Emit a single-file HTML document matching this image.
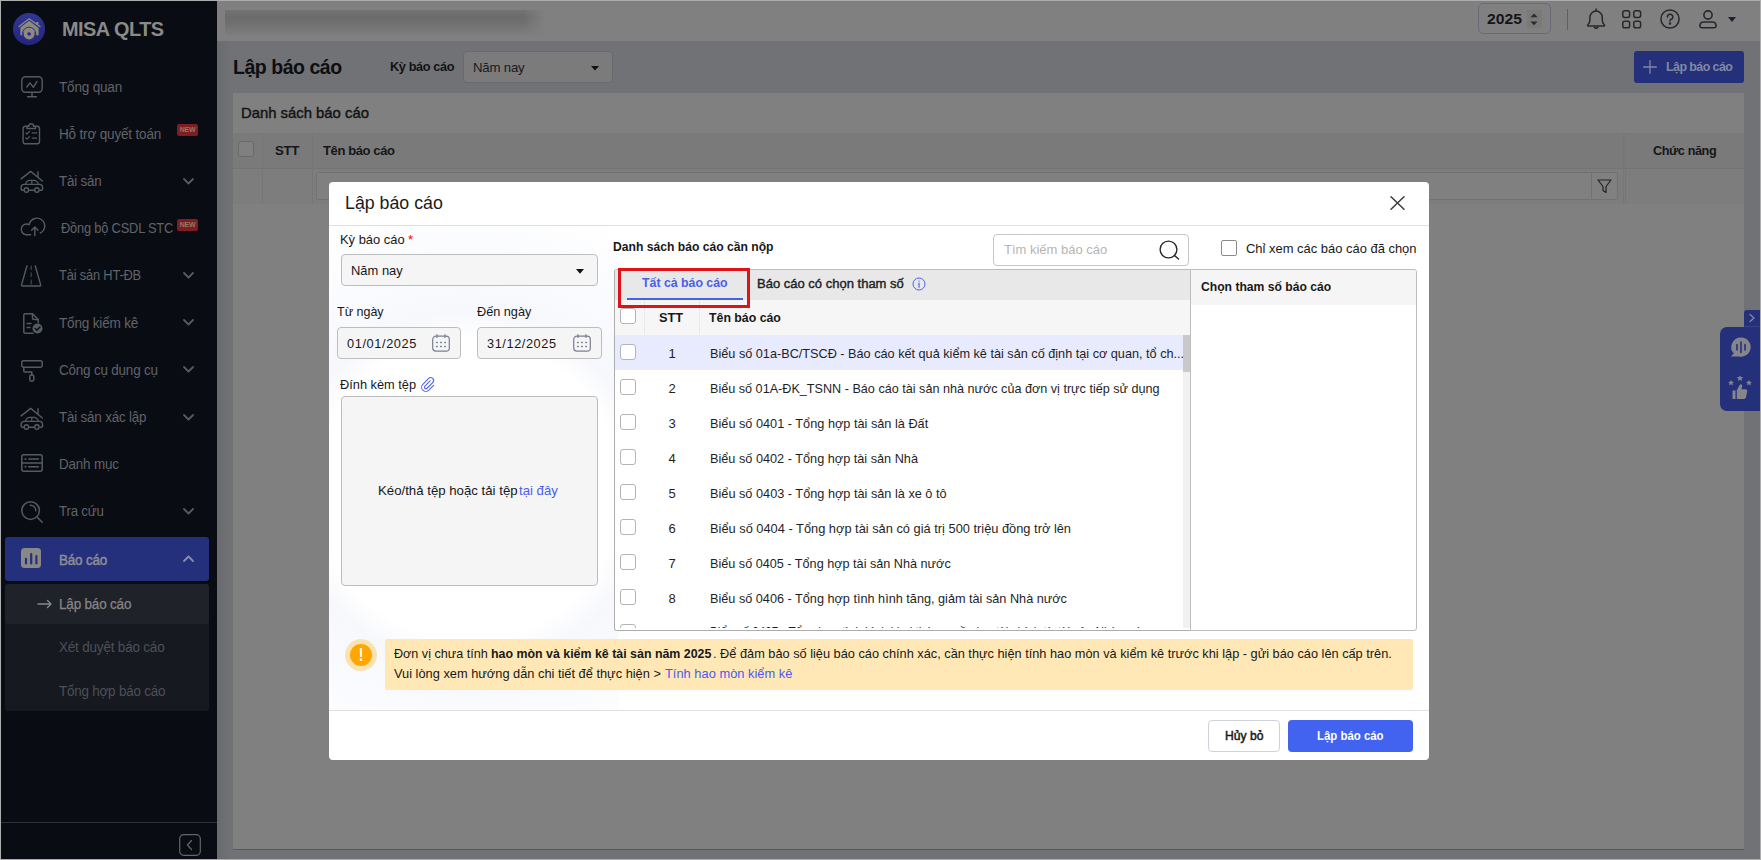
<!DOCTYPE html>
<html lang="vi"><head>
<meta charset="utf-8">
<title>MISA QLTS - Lập báo cáo</title>
<style>
*{box-sizing:border-box;margin:0;padding:0}
html,body{width:1761px;height:860px;overflow:hidden;background:#808080}
body{font-family:"Liberation Sans",sans-serif;font-size:13px;color:#111;position:relative}
.abs{position:absolute}
.t{position:absolute;white-space:nowrap;line-height:20px;height:20px}
.b{font-weight:bold}
.m{font-weight:normal;-webkit-text-stroke:0.4px currentColor}
svg{position:absolute;overflow:visible}
/* frame */
#frame{position:absolute;left:0;top:0;width:1761px;height:860px;background:#adadad}
/* sidebar */
#side{position:absolute;left:1px;top:1px;width:216px;height:858px;background:#0a0c14}
#side .mi{position:absolute;left:58px;font-size:14px;color:#606368;white-space:nowrap;line-height:20px;height:20px;letter-spacing:-0.2px}
#side .chev{position:absolute;left:182px;width:11px;height:7px}
.new{position:absolute;width:21px;height:12px;background:#7e1d22;border-radius:2px;color:#8f7a6a;font-size:7px;font-weight:bold;line-height:12px;text-align:center;letter-spacing:-0.2px}
/* top bar */
#top{position:absolute;left:217px;top:1px;width:1543px;height:40px;background:#808080}
#content{position:absolute;left:217px;top:41px;width:1543px;height:818px;background:#707275}
#card{position:absolute;left:233px;top:93px;width:1511px;height:757px;background:#808080;border-bottom:1px solid #595959}

/* modal */
#modal{position:absolute;left:329px;top:182px;width:1100px;height:578px;background:#fff;border-radius:4px;overflow:hidden}
#modal .t{color:#181818}
.inp{position:absolute;height:32px;border:1px solid #bdbdbd;border-radius:4px;background:#f5f5f5}
.cb{position:absolute;width:16px;height:16px;border:1px solid #b4b4b4;border-radius:3px;background:#fff}
#list{position:absolute;left:285px;top:87px;width:577px;height:362px;border:1px solid #adadad;border-top-color:#bdbdbd;border-right:none;border-radius:3px 0 0 3px;overflow:hidden;background:#fff}
#list .row{position:absolute;left:0;width:568px;height:35px}
#list .row .cb{left:5px;top:9px}
#list .num{position:absolute;left:37px;width:40px;text-align:center;top:9px;line-height:20px;color:#1f1f1f}
#list .nm{position:absolute;left:95px;top:9px;line-height:20px;white-space:nowrap;color:#1f1f1f}
#param{position:absolute;left:861px;top:87px;width:227px;height:362px;border:1px solid #bdbdbd;border-radius:0 3px 3px 0;background:#fff}
</style>
</head>
<body>
<div id="frame"></div>

<!-- ================= SIDEBAR ================= -->
<div id="side">
  <div class="abs" style="left:12px;top:12px;width:32px;height:32px;border-radius:50%;background:linear-gradient(180deg,#2f3794 0%,#292d86 55%,#24257c 100%)"></div>
  <svg style="left:12px;top:12px" width="32" height="32" viewBox="0 0 32 32">
    <path d="M6 13.6 L16.1 5.8 L27 13.6" fill="none" stroke="#8d8a80" stroke-width="1.3" stroke-linejoin="miter" stroke-linecap="round"></path>
    <path d="M23.2 9 H25.4 V12.2 L23.2 10.6 Z" fill="#8d8a80"></path>
    <path d="M7.4 22.2 V14.4 L16.1 7.8 L25.6 14.9 V22.2 H22.9 A7 7 0 0 0 9.3 22.2 Z" fill="#8d8a80"></path>
    <circle cx="16.1" cy="20.9" r="6.7" fill="none" stroke="#2a2f8a" stroke-width="1"></circle><circle cx="16.1" cy="20.9" r="5.5" fill="#8d8a80"></circle>
    <path d="M16.1 18.7 L18.3 20.9 L16.1 23.1 L13.9 20.9 Z" fill="#272b84"></path>
  </svg>
  <div class="t b" style="left: 60.9px; top: 16px; font-size: 20px; color: rgb(138, 138, 138); line-height: 24px; height: 24px; letter-spacing: -0.5px; transform-origin: 0px 50%; transform: scaleX(0.9944);">MISA QLTS</div>
  <svg style="left:20px;top:75px" width="24" height="24" fill="none" stroke="#565a61" stroke-width="1.4" stroke-linecap="round" stroke-linejoin="round"><rect x="0.8" y="0.8" width="20.4" height="15.4" rx="3.6"></rect><path d="M11 16.5 V20.5 M6.5 20.8 H15.5"></path><path d="M5.8 11 L8.9 6.9 L12.4 11.3 L16 5.4"></path></svg>
  <div class="mi" style="top: 76px; left: 57.8px; transform-origin: 0px 50%; transform: scaleX(0.9669);">Tổng quan</div>
  <svg style="left:21px;top:122px" width="24" height="24" fill="none" stroke="#565a61" stroke-width="1.4" stroke-linecap="round" stroke-linejoin="round"><rect x="1.1" y="3.3" width="16.4" height="17.5" rx="2.2"></rect><path d="M4.9 5.5 V4.3 Q4.9 3.3 5.9 3.3 H6.7 Q7.1 0.8 9.2 0.8 Q11.3 0.8 11.7 3.3 H12.5 Q13.5 3.3 13.5 4.3 V5.5 Z" fill="#0a0c14"></path><path d="M3.8 9.8 L5 11 L7.6 8.4 M10.2 9.9 H14.6 M3.8 15 L5 16.2 L7.6 13.6 M10.2 15.1 H14.6" stroke-width="1.2"></path></svg>
  <div class="mi" style="top: 123px; left: 57.8px; transform-origin: 0px 50%; transform: scaleX(0.9686);">Hỗ trợ quyết toán</div>
  <svg style="left:19px;top:169px" width="24" height="24" fill="none" stroke="#565a61" stroke-width="1.4" stroke-linecap="round" stroke-linejoin="round"><path d="M1.1 8.9 L10.7 1.4 L22.4 11 M18 1.6 V7"></path><path d="M3.6 20.3 H2.6 Q1.1 20.3 1.1 18.8 V17.6 Q1.1 14.4 4.3 14.4 H19.4 Q22.6 14.4 22.6 17.6 V18.8 Q22.6 20.3 21.1 20.3 H20.1 M9.2 20.3 H14"></path><path d="M5.3 14.4 Q6.6 10.3 9.6 10.3 H14 Q17.2 10.3 18.6 14.4 M11.8 10.3 V14.4" stroke-width="1.2"></path><circle cx="6.4" cy="20" r="2.2"></circle><circle cx="16.9" cy="20" r="2.2"></circle></svg>
  <div class="mi" style="top: 170px; left: 57.8px; transform-origin: 0px 50%; transform: scaleX(0.9525);">Tài sản</div>
  <svg class="chev" style="top:177px" width="11" height="7" fill="none" stroke="#565a61" stroke-width="1.8" stroke-linecap="round" stroke-linejoin="round"><path d="M1 1 L5.5 5.5 L10 1"></path></svg>
  <svg style="left:19px;top:215px" width="26" height="24" fill="none" stroke="#565a61" stroke-width="1.4" stroke-linecap="round" stroke-linejoin="round"><path d="M10.6 18.8 H6.3 A5.4 5.4 0 1 1 9.2 8.64 A7.8 7.8 0 1 1 20.3 17"></path><path d="M14.8 19.6 V11.2 M11.6 14.3 L14.8 11 L18 14.3"></path></svg>
  <div class="mi" style="top: 217px; left: 60px; transform-origin: 0px 50%; transform: scaleX(0.9163);">Đồng bộ CSDL STC</div>
  <svg style="left:19px;top:264px" width="24" height="24" fill="none" stroke="#565a61" stroke-width="1.4" stroke-linecap="round" stroke-linejoin="round"><path d="M6.9 1 L1.6 19.6 Q1.3 21 2.6 21 H19.6 Q20.9 21 20.6 19.6 L15.3 1"></path><path d="M11.2 1 V4.6 M11.2 7.8 V11.6 M11.2 15 V19" stroke-width="1" stroke="#4c5057"></path></svg>
  <div class="mi" style="top: 264px; left: 57.8px; transform-origin: 0px 50%; transform: scaleX(0.9193);">Tài sản HT-ĐB</div>
  <svg class="chev" style="top:271px" width="11" height="7" fill="none" stroke="#565a61" stroke-width="1.8" stroke-linecap="round" stroke-linejoin="round"><path d="M1 1 L5.5 5.5 L10 1"></path></svg>
  <svg style="left:22px;top:312px" width="24" height="24" fill="none" stroke="#565a61" stroke-width="1.5" stroke-linecap="round" stroke-linejoin="round"><path d="M10 20.2 H2.3 Q0.8 20.2 0.8 18.7 V2.3 Q0.8 0.8 2.3 0.8 H9.5 L15.2 6.5 V9.5"></path><path d="M9.5 0.8 V5 Q9.5 6.5 11 6.5 H15.2"></path><path d="M4.2 10.5 H8 M4.2 14.5 H7"></path><circle cx="14.5" cy="15.5" r="5" fill="#565a61" stroke="none"></circle><path d="M12.2 15.6 L13.9 17.3 L17 14" stroke="#0a0c14" stroke-width="1.4"></path></svg>
  <div class="mi" style="top: 312px; left: 58px; transform-origin: 0px 50%; transform: scaleX(0.9701);">Tổng kiểm kê</div>
  <svg class="chev" style="top:318.3px" width="11" height="7" fill="none" stroke="#565a61" stroke-width="1.8" stroke-linecap="round" stroke-linejoin="round"><path d="M1 1 L5.5 5.5 L10 1"></path></svg>
  <svg style="left:20px;top:359px" width="24" height="24" fill="none" stroke="#565a61" stroke-width="1.5" stroke-linecap="round" stroke-linejoin="round"><rect x="0.8" y="0.8" width="20.4" height="6.4" rx="1.6"></rect><path d="M2.8 7.2 V11 Q2.8 12 3.8 12 H10.8 V15"></path><rect x="8.8" y="15" width="4" height="6.2" rx="1.6"></rect></svg>
  <div class="mi" style="top: 359px; left: 58px; transform-origin: 0px 50%; transform: scaleX(0.9605);">Công cụ dụng cụ</div>
  <svg class="chev" style="top:365.3px" width="11" height="7" fill="none" stroke="#565a61" stroke-width="1.8" stroke-linecap="round" stroke-linejoin="round"><path d="M1 1 L5.5 5.5 L10 1"></path></svg>
  <svg style="left:19px;top:406px" width="24" height="24" fill="none" stroke="#565a61" stroke-width="1.4" stroke-linecap="round" stroke-linejoin="round"><path d="M1.1 8.9 L10.7 1.4 L22.4 11 M18 1.6 V7"></path><path d="M3.6 20.3 H2.6 Q1.1 20.3 1.1 18.8 V17.6 Q1.1 14.4 4.3 14.4 H19.4 Q22.6 14.4 22.6 17.6 V18.8 Q22.6 20.3 21.1 20.3 H20.1 M9.2 20.3 H14"></path><path d="M5.3 14.4 Q6.6 10.3 9.6 10.3 H14 Q17.2 10.3 18.6 14.4 M11.8 10.3 V14.4" stroke-width="1.2"></path><circle cx="6.4" cy="20" r="2.2"></circle><circle cx="16.9" cy="20" r="2.2"></circle></svg>
  <div class="mi" style="top: 406px; left: 58px; transform-origin: 0px 50%; transform: scaleX(0.9575);">Tài sản xác lập</div>
  <svg class="chev" style="top:413px" width="11" height="7" fill="none" stroke="#565a61" stroke-width="1.8" stroke-linecap="round" stroke-linejoin="round"><path d="M1 1 L5.5 5.5 L10 1"></path></svg>
  <svg style="left:20px;top:453px" width="24" height="24" fill="none" stroke="#565a61" stroke-width="1.5" stroke-linecap="round" stroke-linejoin="round"><rect x="0.8" y="0.8" width="20.4" height="16.4" rx="2"></rect><path d="M0.8 9 H21.2 M7.8 5.1 H17.4 M7.8 12.7 H17.4"></path><path d="M4.3 5.1 H4.7 M4.3 12.7 H4.7" stroke-width="1.7"></path></svg>
  <div class="mi" style="top: 453px; left: 58px; transform-origin: 0px 50%; transform: scaleX(0.9595);">Danh mục</div>
  <svg style="left:20px;top:500px" width="24" height="24" fill="none" stroke="#565a61" stroke-width="1.5" stroke-linecap="round" stroke-linejoin="round"><circle cx="9.6" cy="9.6" r="8.8"></circle><path d="M16 16 L21.2 21.2"></path><path d="M9.2 4.2 A5.4 5.4 0 0 1 14.8 9.8" stroke-width="1.4"></path></svg>
  <div class="mi" style="top: 500px; left: 58px; transform-origin: 0px 50%; transform: scaleX(0.9461);">Tra cứu</div>
  <svg class="chev" style="top:507px" width="11" height="7" fill="none" stroke="#565a61" stroke-width="1.8" stroke-linecap="round" stroke-linejoin="round"><path d="M1 1 L5.5 5.5 L10 1"></path></svg>
  <div class="new" style="left:176px;top:123px">NEW</div>
  <div class="new" style="left:176px;top:218px">NEW</div>
  <div class="abs" style="left:4px;top:536px;width:204px;height:44px;background:#24307c;border-radius:3px"></div>
  <svg style="left:20px;top:547px" width="20" height="21"><rect x="0" y="0" width="20" height="20" rx="3.5" fill="#888888"></rect><path d="M5 10.8 V15.4 M10.2 6 V15.4 M15.4 8 V15.4" stroke="#24307c" stroke-width="2.2" stroke-linecap="round"></path></svg>
  <div class="mi m" style="top: 549px; left: 58.1px; color: rgb(140, 142, 150); -webkit-text-stroke-width: 0.45px; transform-origin: 0px 50%; transform: scaleX(0.9623);">Báo cáo</div>
  <svg class="chev" style="top:554px" width="11" height="7" fill="none" stroke="#8c8f9c" stroke-width="1.8" stroke-linecap="round" stroke-linejoin="round"><path d="M1 6 L5.5 1.5 L10 6"></path></svg>
  <div class="abs" style="left:4px;top:583px;width:204px;height:127px;background:#171921;border-radius:3px"></div>
  <div class="abs" style="left:4px;top:583px;width:204px;height:40px;background:#202229;border-radius:3px"></div>
  <svg style="left:36px;top:598px" width="16" height="10" fill="none" stroke="#85878c" stroke-width="1.4" stroke-linecap="round" stroke-linejoin="round"><path d="M1 5 H14 M10.5 1.5 L14 5 L10.5 8.5"></path></svg>
  <div class="mi m" style="top: 593px; left: 58.1px; color: rgb(134, 134, 134); -webkit-text-stroke-width: 0.25px; transform-origin: 0px 50%; transform: scaleX(0.9643);">Lập báo cáo</div>
  <div class="mi" style="top: 636px; left: 58.1px; color: rgb(77, 80, 86); transform-origin: 0px 50%; transform: scaleX(0.9637);">Xét duyệt báo cáo</div>
  <div class="mi" style="top: 680px; left: 58.1px; color: rgb(77, 80, 86); transform-origin: 0px 50%; transform: scaleX(0.9561);">Tổng hợp báo cáo</div>
  <div class="abs" style="left:0;top:821px;width:216px;height:1px;background:#2e3036"></div>
  <svg style="left:178px;top:833px" width="22" height="22" fill="none" stroke="#62656a" stroke-width="1.2" stroke-linecap="round" stroke-linejoin="round"><rect x="0.7" y="0.7" width="20.6" height="20.6" rx="4"></rect><path d="M12.5 6.5 L8.5 11 L12.5 15.5"></path></svg>
</div>

<!-- ================= TOP BAR + PAGE ================= -->
<div id="top"></div>
<div id="content"></div>
<div class="abs" style="left:217px;top:41px;width:14px;height:818px;background:linear-gradient(90deg,rgba(0,0,0,0.07),rgba(0,0,0,0))"></div>
<div id="card"></div>

<!-- blurred org name -->
<div class="abs" style="left:225px;top:10px;width:320px;height:26px;background:linear-gradient(90deg,rgba(128,128,128,0) 0,rgba(128,128,128,0) 93%,#808080 100%),linear-gradient(180deg,#737373 0,#6b6b6b 28%,#717171 55%,#7a7a7a 85%,#7e7e7e 100%)"></div>
<!-- year -->
<div class="abs" style="left:1478px;top:3px;width:73px;height:31px;border:1px solid #676b75;border-radius:5px"></div>
<div class="abs" style="left:1527px;top:10px;width:15px;height:18px;background:#7a7a7a"></div>
<div class="t b" style="left: 1486.5px; top: 8px; font-size: 15.2px; color: rgb(21, 21, 26); line-height: 22px; height: 22px; transform-origin: 0px 50%; transform: scaleX(1.0356);">2025</div>
<svg style="left:1530.4px;top:12.6px" width="8" height="13"><path d="M0.4 4.3 L4 0.4 L7.6 4.3 Z M0.4 8.4 L4 12.3 L7.6 8.4 Z" fill="#2a2c30"></path></svg>
<div class="abs" style="left:1567px;top:9px;width:1px;height:21px;background:#5e6066"></div>
<!-- bell -->
<svg style="left:1586px;top:8px" width="21" height="22" fill="none" stroke="#26282c" stroke-width="1.5" stroke-linecap="round" stroke-linejoin="round"><path d="M10.1 1 V2.6"></path><path d="M3.9 12 V9.3 A6.2 6.2 0 0 1 16.3 9.3 V12 Q16.3 15 18.1 16.5 Q18.9 17.3 18.3 17.9 Q18.1 18.1 17.5 18.1 H2.7 Q2.1 18.1 1.9 17.9 Q1.3 17.3 2.1 16.5 Q3.9 15 3.9 12 Z"></path><path d="M8.3 19.2 Q10.1 21 11.9 19.2"></path></svg>
<!-- grid -->
<svg style="left:1622px;top:10px" width="20" height="19" fill="none" stroke="#26282c" stroke-width="1.5"><rect x="0.8" y="0.8" width="6.8" height="6.6" rx="1.8"></rect><rect x="11.8" y="0.8" width="6.8" height="6.6" rx="1.8"></rect><rect x="0.8" y="11.2" width="6.8" height="6.6" rx="1.8"></rect><rect x="11.8" y="11.2" width="6.8" height="6.6" rx="1.8"></rect></svg>
<!-- help -->
<svg style="left:1660px;top:9px" width="20" height="20" fill="none" stroke="#26282c" stroke-width="1.5" stroke-linecap="round"><circle cx="10" cy="10" r="9.1"></circle><path d="M7.4 7.9 A2.7 2.7 0 1 1 10.8 10.5 Q10 10.9 10 12"></path><circle cx="10" cy="14.6" r="0.5" fill="#26282c"></circle></svg>
<!-- user -->
<svg style="left:1699px;top:10px" width="18" height="19" fill="none" stroke="#26282c" stroke-width="1.6"><circle cx="9" cy="5" r="4.1"></circle><path d="M2.6 17.7 Q0.9 17.7 0.9 16.1 Q0.9 12 4.8 12 H13.2 Q17.1 12 17.1 16.1 Q17.1 17.7 15.4 17.7 Z"></path></svg>
<svg style="left:1728px;top:17px" width="8" height="5"><path d="M0 0 H8 L4 5 Z" fill="#1c2030"></path></svg>

<!-- page header -->
<div class="t b" style="left: 232.9px; top: 53px; font-size: 20px; line-height: 28px; height: 28px; color: rgb(14, 14, 16); letter-spacing: -0.5px; transform-origin: 0px 50%; transform: scaleX(0.9766);">Lập báo cáo</div>
<div class="t b" style="left: 390.4px; top: 57px; color: rgb(19, 19, 22); letter-spacing: -0.4px; transform-origin: 0px 50%; transform: scaleX(0.9823);">Kỳ báo cáo</div>
<div class="abs" style="left:463px;top:51px;width:150px;height:32px;border:1px solid #686a6e;border-radius:4px;background:#7b7b7b"></div>
<div class="t" style="left: 473px; top: 58px; color: rgb(26, 26, 28); letter-spacing: -0.2px; transform-origin: 0px 50%; transform: scaleX(1.0173);">Năm nay</div>
<svg style="left:591px;top:66px" width="8" height="5"><path d="M0 0 H8 L4 4.6 Z" fill="#101012"></path></svg>
<div class="abs" style="left:1634px;top:51px;width:110px;height:32px;background:#24307a;border-radius:3px"></div>
<svg style="left:1643px;top:60px" width="14" height="14" stroke="#8388a2" stroke-width="1.3" stroke-linecap="round"><path d="M7 0.7 V13.3 M0.7 7 H13.3"></path></svg>
<div class="t b" style="left: 1665.5px; top: 57px; color: rgb(131, 136, 162); letter-spacing: -0.6px; transform-origin: 0px 50%; transform: scaleX(0.9574);">Lập báo cáo</div>

<!-- list card -->
<div class="t m" style="left: 240.8px; top: 103px; font-size: 15px; color: rgb(20, 20, 22); -webkit-text-stroke-width: 0.45px; transform-origin: 0px 50%; transform: scaleX(0.9894);">Danh sách báo cáo</div>
<div class="abs" style="left:233px;top:133px;width:1511px;height:36px;background:#7a7a7a;border-bottom:1px solid #747474"></div>
<div class="abs" style="left:233px;top:169px;width:1511px;height:35px;background:#7d7d7d"></div>
<div class="abs" style="left:262px;top:133px;width:1px;height:71px;background:#767676"></div>
<div class="abs" style="left:312px;top:133px;width:1px;height:71px;background:#767676"></div>
<div class="abs" style="left:1623px;top:133px;width:1px;height:71px;background:#767676"></div>
<div class="abs" style="left:1625px;top:133px;width:1px;height:71px;background:#767676"></div>
<div class="abs" style="left:238px;top:141px;width:16px;height:16px;border:1px solid #6a6a6a;border-radius:3px;background:#808080"></div>
<div class="t b" style="left: 275.4px; top: 141px; color: rgb(22, 22, 24); letter-spacing: -0.3px; transform-origin: 0px 50%; transform: scaleX(1.0188);">STT</div>
<div class="t b" style="left: 322.8px; top: 141px; color: rgb(22, 22, 24); letter-spacing: -0.4px; transform-origin: 0px 50%; transform: scaleX(1.0021);">Tên báo cáo</div>
<div class="t b" style="left: 1653px; top: 141px; color: rgb(22, 22, 24); letter-spacing: -0.4px; transform-origin: 0px 50%; transform: scaleX(0.9731);">Chức năng</div>
<div class="abs" style="left:316px;top:172px;width:1302px;height:28px;border:1px solid #727272;border-radius:2px;background:#808080"></div>
<div class="abs" style="left:1591px;top:172px;width:1px;height:28px;background:#727272"></div>
<svg style="left:1597px;top:179px" width="15" height="15" fill="none" stroke="#222" stroke-width="1.2" stroke-linejoin="round"><path d="M1 1 H14 L9 7.5 V13.5 L6 11.5 V7.5 Z"></path></svg>

<!-- right floating widget -->
<div class="abs" style="left:1744px;top:310px;width:16px;height:17px;background:#24307a;border-radius:3px 0 0 0;border-bottom:1px solid #39427f"></div>
<svg style="left:1748px;top:313px" width="8" height="10" fill="none" stroke="#8388a2" stroke-width="1.3" stroke-linecap="round" stroke-linejoin="round"><path d="M2 1.5 L6 5 L2 8.5"></path></svg>
<div class="abs" style="left:1720px;top:327px;width:40px;height:84px;background:#24307a;border-radius:7px 0 0 7px"></div>
<svg style="left:1730px;top:337px" width="22" height="22"><path d="M11 0.4 A9.7 9.7 0 1 1 8.6 19.5 H0.8 L3.8 16.6 A9.7 9.7 0 0 1 11 0.4 Z" fill="#84868c"></path><path d="M7 7.5 V13 M11 5 V15.5 M15 7.5 V13" stroke="#24307a" stroke-width="1.6" stroke-linecap="round"></path></svg>
<svg style="left:1726px;top:374px" width="28" height="26" fill="#84868c"><path d="M6.5 25 V16.5 H9.5 V25 Z M10.8 25 V16.3 L13.6 11 Q14.3 9.8 15.4 10.4 Q16.6 11.1 16.2 12.6 L15.5 15.2 H19.6 Q21.6 15.2 21.2 17.2 L20 23.3 Q19.6 25 18 25 Z"></path><path d="M14 1.4 L15 3 L17.3 3.2 L15.5 4.8 L16.1 7 L14 5.8 L11.9 7 L12.5 4.8 L10.7 3.2 L13 3 Z"></path><path d="M5 5.8 L5.9 7.7 L8 7.9 L6.4 9.3 L6.9 11.4 L5 10.3 L3.1 11.4 L3.6 9.3 L2 7.9 L4.1 7.7 Z"></path><path d="M23 5.8 L23.9 7.7 L26 7.9 L24.4 9.3 L24.9 11.4 L23 10.3 L21.1 11.4 L21.6 9.3 L20 7.9 L22.1 7.7 Z"></path></svg>

<!-- ================= MODAL ================= -->
<div id="modal">
 <div class="abs" style="left:0;top:44px;width:290px;height:484px;background:radial-gradient(circle at 140px 264px,#ffffff 0,#ffffff 150px,#f7f8fc 178px,#fafbfe 230px,#ffffff 300px)"></div>
 <div class="t" style="left: 15.7px; top: 7.2px; font-size: 18.9px; line-height: 28px; height: 28px; color: rgb(26, 26, 26); transform-origin: 0px 50%; transform: scaleX(0.9404);">Lập báo cáo</div>
 <svg style="left:1061px;top:14px" width="15" height="14" stroke="#3a3a3a" stroke-width="1.5" stroke-linecap="round"><path d="M1 0.8 L14 13.2 M14 0.8 L1 13.2"></path></svg>
 <div class="abs" style="left:0;top:43px;width:1100px;height:1px;background:#e0e0e0"></div>
 <div class="t" style="left: 11.3px; top: 48px; transform-origin: 0px 50%; transform: scaleX(0.9931);">Kỳ báo cáo</div>
 <div class="t" style="left:79px;top:48px;color:#f00">*</div>
 <div class="inp" style="left:12px;top:72px;width:257px"></div>
 <div class="t" style="left: 21.8px; top: 79px; transform-origin: 0px 50%; transform: scaleX(0.9956);">Năm nay</div>
 <svg style="left:247px;top:87px" width="8" height="5"><path d="M0 0 H8 L4 4.8 Z" fill="#111"></path></svg>
 <div class="t" style="left: 7.8px; top: 120px; transform-origin: 0px 50%; transform: scaleX(0.9618);">Từ ngày</div>
 <div class="t" style="left: 147.7px; top: 120px; transform-origin: 0px 50%; transform: scaleX(0.9756);">Đến ngày</div>
 <div class="inp" style="left:8px;top:145px;width:124px"></div>
 <div class="inp" style="left:148px;top:145px;width:125px"></div>
 <div class="t" style="left: 17.8px; top: 152px; letter-spacing: 0.6px; transform-origin: 0px 50%; transform: scaleX(0.9848);">01/01/2025</div>
 <div class="t" style="left: 158.1px; top: 152px; letter-spacing: 0.6px; transform-origin: 0px 50%; transform: scaleX(0.9792);">31/12/2025</div>
 <svg style="left:103px;top:152px" width="18" height="18" fill="none" stroke="#7a7f92" stroke-width="1.2" stroke-linecap="round"><rect x="0.7" y="2.2" width="16.6" height="15" rx="3.2"></rect><path d="M5 0.7 V3.5 M13 0.7 V3.5"></path><path d="M4.6 8.4 H5.2 M8.7 8.4 H9.3 M12.8 8.4 H13.4 M4.6 12.4 H5.2 M8.7 12.4 H9.3 M12.8 12.4 H13.4" stroke-width="1.5"></path></svg>
 <svg style="left:244px;top:152px" width="18" height="18" fill="none" stroke="#7a7f92" stroke-width="1.2" stroke-linecap="round"><rect x="0.7" y="2.2" width="16.6" height="15" rx="3.2"></rect><path d="M5 0.7 V3.5 M13 0.7 V3.5"></path><path d="M4.6 8.4 H5.2 M8.7 8.4 H9.3 M12.8 8.4 H13.4 M4.6 12.4 H5.2 M8.7 12.4 H9.3 M12.8 12.4 H13.4" stroke-width="1.5"></path></svg>
 <div class="t" style="left: 11.3px; top: 193px; transform-origin: 0px 50%; transform: scaleX(0.9841);">Đính kèm tệp</div>
 <svg style="left:92px;top:195px;transform:scale(0.93);transform-origin:0 0" width="15" height="16" fill="none" stroke="#4a62ee" stroke-width="1.15" stroke-linecap="round" stroke-linejoin="round"><path d="M9.8 4.2 L4.2 9.8 A1.6 1.6 0 0 0 6.5 12.1 L12.6 6 A3.1 3.1 0 0 0 8.2 1.6 L2 7.8 A4.5 4.5 0 0 0 8.4 14.2 L13.6 9"></path></svg>
 <div class="abs" style="left:12px;top:214px;width:257px;height:190px;border:1px solid #bdbdbd;border-radius:4px;background:#f5f5f5"></div>
 <div class="t" style="left: 48.5px; top: 299px; transform-origin: 0px 50%; transform: scaleX(1.0165);">Kéo/thả tệp hoặc tải tệp</div>
 <div class="t" style="left: 189.5px; top: 299px; color: rgb(74, 95, 232); transform-origin: 0px 50%; transform: scaleX(1.0127);">tại đây</div>
 <div class="t b" style="left: 284.1px; top: 55px; transform-origin: 0px 50%; transform: scaleX(0.9335);">Danh sách báo cáo cần nộp</div>
 <div class="abs" style="left:664px;top:52px;width:196px;height:32px;border:1px solid #c6c6c6;border-radius:4px;background:#fff"></div>
 <div class="t" style="left: 674.9px; top: 58px; color: rgb(181, 181, 181); transform-origin: 0px 50%; transform: scaleX(0.9988);">Tìm kiếm báo cáo</div>
 <svg style="left:830px;top:58px" width="21" height="20" fill="none" stroke="#2a2a2a" stroke-width="1.4" stroke-linecap="round"><circle cx="9.5" cy="9.5" r="8.4"></circle><path d="M15.6 15.6 L19.6 19"></path></svg>
 <div class="cb" style="left:892px;top:58px;border-color:#8a8a8a;border-radius:2px"></div>
 <div class="t" style="left: 917.4px; top: 57px; transform-origin: 0px 50%; transform: scaleX(0.9954);">Chỉ xem các báo cáo đã chọn</div>
 <div id="list">
  <div class="abs" style="left:0;top:0;width:577px;height:30px;background:#e8e8e8"></div>
  <div class="abs" style="left:0;top:30px;width:577px;height:35px;background:#f6f6f6"></div>
  <div class="abs" style="left:29px;top:30px;width:1px;height:35px;background:#e9e9e9"></div>
  <div class="abs" style="left:84px;top:30px;width:1px;height:35px;background:#e9e9e9"></div>
  <div class="t b" style="left: 27.3px; top: 3px; color: rgb(74, 95, 232); transform-origin: 0px 50%; transform: scaleX(0.9478);">Tất cả báo cáo</div>
  <div class="abs" style="left:12px;top:28px;width:116px;height:2px;background:#4461ee"></div>
  <div class="t m" style="left: 141.9px; top: 4px; color: rgb(34, 34, 34); transform-origin: 0px 50%; transform: scaleX(1.0007);">Báo cáo có chọn tham số</div>
  <svg style="left:297px;top:7px" width="14" height="14" fill="none" stroke="#4a62ee" stroke-width="1"><circle cx="7" cy="7" r="6"></circle><path d="M7 6.2 V10.2" stroke-width="1.2" stroke-linecap="round"></path><circle cx="7" cy="4.1" r="0.7" fill="#4a62ee" stroke="none"></circle></svg>
  <div class="cb" style="left:5px;top:38px"></div>
  <div class="t b" style="left: 44.1px; top: 38px; transform-origin: 0px 50%; transform: scaleX(0.9852);">STT</div>
  <div class="t b" style="left: 94.2px; top: 38px; transform-origin: 0px 50%; transform: scaleX(0.9478);">Tên báo cáo</div>
  <div class="row" style="top:65px;background:#e8eafd"><div class="cb"></div><div class="num">1</div><div class="nm" style="transform-origin: 0px 50%; transform: scaleX(0.9752); left: 94.7px;">Biểu số 01a-BC/TSCĐ - Báo cáo kết quả kiểm kê tài sản cố định tại cơ quan, tổ ch...</div></div>
  <div class="row" style="top:100px"><div class="cb"></div><div class="num">2</div><div class="nm" style="transform-origin: 0px 50%; transform: scaleX(0.9711); left: 94.7px;">Biểu số 01A-ĐK_TSNN - Báo cáo tài sản nhà nước của đơn vị trực tiếp sử dụng</div></div>
  <div class="row" style="top:135px"><div class="cb"></div><div class="num">3</div><div class="nm" style="transform-origin: 0px 50%; transform: scaleX(0.9787); left: 94.7px;">Biểu số 0401 - Tổng hợp tài sản là Đất</div></div>
  <div class="row" style="top:170px"><div class="cb"></div><div class="num">4</div><div class="nm" style="transform-origin: 0px 50%; transform: scaleX(0.9774); left: 94.7px;">Biểu số 0402 - Tổng hợp tài sản Nhà</div></div>
  <div class="row" style="top:205px"><div class="cb"></div><div class="num">5</div><div class="nm" style="transform-origin: 0px 50%; transform: scaleX(0.9788); left: 94.7px;">Biểu số 0403 - Tổng hợp tài sản là xe ô tô</div></div>
  <div class="row" style="top:240px"><div class="cb"></div><div class="num">6</div><div class="nm" style="transform-origin: 0px 50%; transform: scaleX(0.9867); left: 94.7px;">Biểu số 0404 - Tổng hợp tài sản có giá trị 500 triệu đồng trở lên</div></div>
  <div class="row" style="top:275px"><div class="cb"></div><div class="num">7</div><div class="nm" style="transform-origin: 0px 50%; transform: scaleX(0.973); left: 94.7px;">Biểu số 0405 - Tổng hợp tài sản Nhà nước</div></div>
  <div class="row" style="top:310px"><div class="cb"></div><div class="num">8</div><div class="nm" style="transform-origin: 0px 50%; transform: scaleX(0.9754); left: 94.7px;">Biểu số 0406 - Tổng hợp tình hình tăng, giảm tài sản Nhà nước</div></div>
  <div class="row" style="top:345px"><div class="cb"></div><div class="num">9</div><div class="nm" style="top: 7px; transform-origin: 0px 50%; transform: scaleX(0.8987); left: 94.7px;">Biểu số 0407 - Tổng hợp tình hình khai thác nguồn lực tài chính từ tài sản Nhà nước</div></div>
  <div class="abs" style="left:568px;top:65px;width:9px;height:300px;background:#f1f1f1"></div>
  <div class="abs" style="left:568px;top:65px;width:7px;height:37px;background:#c9c9c9"></div>
  <div class="abs" style="left:0;top:358px;width:577px;height:2px;background:#fff"></div>
 </div>
 <div id="param"><div class="abs" style="left:0;top:0;width:225px;height:35px;background:#f5f5f5;border-radius:0 3px 0 0"></div><div class="t b" style="left: 10.2px; top: 7px; transform-origin: 0px 50%; transform: scaleX(0.934);">Chọn tham số báo cáo</div></div>
 <div class="abs" style="left:289px;top:86px;width:132px;height:40px;border:3px solid #dc1419"></div>
 <div class="abs" style="left:16px;top:457px;width:32px;height:32px;border-radius:50%;background:#fae3ae"></div>
 <div class="abs" style="left:21px;top:462px;width:22px;height:22px;border-radius:50%;background:#ffa600"></div>
 <div class="t b" style="left:27px;top:462px;width:10px;text-align:center;color:#fff;font-size:17.5px;line-height:22px;height:22px;transform:scaleX(0.78)">!</div>
 <div class="abs" style="left:56px;top:457px;width:1028px;height:51px;background:#ffe8b6;border-radius:2px"></div>
 <div class="t" style="left: 65.2px; top: 462px; transform-origin: 0px 50%; transform: scaleX(0.9688);">Đơn vị chưa tính</div>
 <div class="t b" style="left: 162px; top: 462px; transform-origin: 0px 50%; transform: scaleX(0.9531);">hao mòn và kiểm kê tài sản năm 2025</div>
 <div class="t" style="left: 383.5px; top: 462px; transform-origin: 0px 50%; transform: scaleX(0.9816);">. Để đảm bảo số liệu báo cáo chính xác, cần thực hiện tính hao mòn và kiểm kê trước khi lập - gửi báo cáo lên cấp trên.</div>
 <div class="t" style="left: 65.2px; top: 482px; transform-origin: 0px 50%; transform: scaleX(0.9856);">Vui lòng xem hướng dẫn chi tiết để thực hiện &gt;</div>
 <div class="t" style="left: 335.8px; top: 482px; color: rgb(74, 90, 240); transform-origin: 0px 50%; transform: scaleX(0.9905);">Tính hao mòn kiểm kê</div>
 <div class="abs" style="left:0;top:528px;width:1100px;height:1px;background:#e0e0e0"></div>
 <div class="abs" style="left:879px;top:538px;width:72px;height:32px;border:1px solid #ced2da;border-radius:4px;background:#fff"></div>
 <div class="t m" style="left: 895.6px; top: 544px; -webkit-text-stroke-width: 0.5px; transform-origin: 0px 50%; transform: scaleX(0.9344);">Hủy bỏ</div>
 <div class="abs" style="left:959px;top:538px;width:125px;height:32px;border-radius:4px;background:#4262f0"></div>
 <div class="t b" style="left: 987.8px; top: 544px; color: rgb(255, 255, 255); transform-origin: 0px 50%; transform: scaleX(0.8779);">Lập báo cáo</div>
</div>


</body></html>
